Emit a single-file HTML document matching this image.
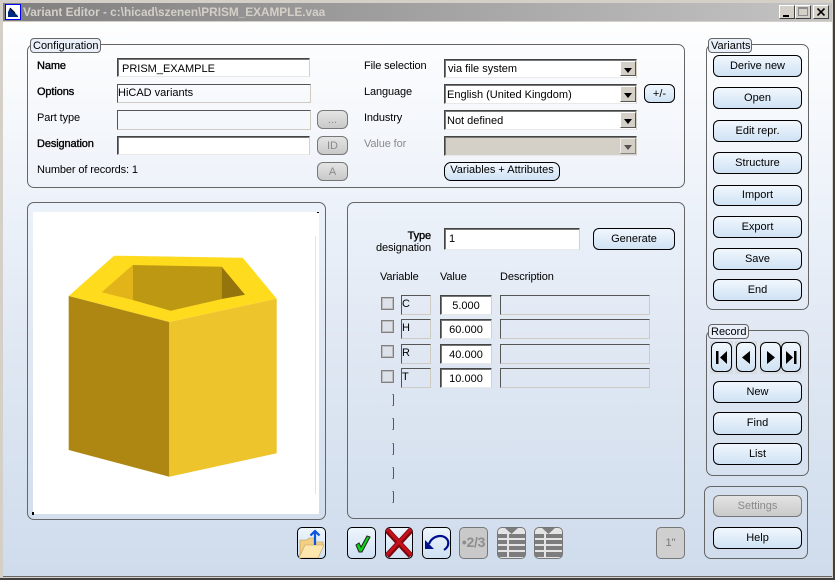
<!DOCTYPE html>
<html><head><meta charset="utf-8">
<style>
html,body{margin:0;padding:0;background:#d4d0c8}
#w{position:relative;width:835px;height:580px;overflow:hidden;background:#d4d0c8;font-family:"Liberation Sans",sans-serif;font-size:11px;color:#000}
#w div,#w svg{position:absolute;box-sizing:border-box}
.bg{left:3px;top:22px;width:829px;height:555px;background:linear-gradient(#fefefe 0%,#eef3fa 30%,#dfe7f3 60%,#cfdcec 100%)}
.tb{left:3px;top:3px;width:829px;height:18px;background:linear-gradient(90deg,#7f7f7f,#c4c4c4)}
.tt{left:23px;top:4px;font-weight:bold;font-size:11.8px;color:#d4d0c8;white-space:nowrap;line-height:17px}
.g{border:1px solid #666;border-radius:7px}
.lg{border:1px solid #666;border-radius:4px;background:#e9f0fa;height:15px;line-height:15px;padding-left:2px;white-space:nowrap;font-size:11px}
.l{white-space:nowrap;line-height:13px;height:13px;margin-top:1px;letter-spacing:-.12px}
.b{-webkit-text-stroke:.35px #000}
.f{background:#fff;border:1px solid;border-color:#444 #d4d0c8 #e8e8e8 #444;box-shadow:inset 1px 1px 0 #777;line-height:20px;padding-left:4px;white-space:nowrap}
.ro{background:transparent;border-color:#555 #cfcbc3 #cfcbc3 #555;box-shadow:none;padding-left:0;line-height:16px}
.btn{border:1px solid #000;border-radius:6px;background:linear-gradient(#f1f7fd,#cfe2f4);text-align:center;line-height:21px;white-space:nowrap}
.dis{border-color:#777;background:linear-gradient(#e4e4e4,#c9c9c9);color:#8a8a8a}
.dd{width:16px;background:#d4d0c8;border:1px solid;border-color:#fff #555 #555 #fff}
.dd:after{content:"";position:absolute;left:3px;top:6px;border:4px solid transparent;border-top:5px solid #000;border-bottom:0}
.cb{width:13px;height:13px;background:#dde2ea;border:1px solid #808080;box-shadow:inset 0 0 0 1px #bdbdbd}
.br{left:392px;width:2px;height:12px;border-right:1px solid #555;border-top:1px solid #999;border-bottom:1px solid #999}
.nav{background:#d8dde4;top:341px;height:33px}
.ib{top:527px;height:32px;width:29px;border:1px solid #000;border-radius:5px;background:linear-gradient(#eef5fc,#cfe1f3)}
.ig{border-color:#777;background:#c9c9c9}
</style></head><body>
<div id="w">
<div class="tb"></div>
<div class="bg"></div>
<div style="left:3px;top:576px;width:829px;height:1px;background:#666"></div>
<div style="left:0;top:578px;width:835px;height:2px;background:#404040"></div>
<div style="left:833px;top:0;width:2px;height:580px;background:#404040"></div>

<svg style="left:5px;top:4px" width="16" height="16" viewBox="0 0 16 16"><rect width="16" height="16" fill="#fff"/><rect x=".5" y=".5" width="15" height="15" fill="none" stroke="#00f"/><path d="M3 13V8L5 4l3 3 2 2 3 3v1z" fill="#002a80"/><path d="M5 4l5 5" stroke="#000"/></svg>
<div class="tt">Variant Editor - c:\hicad\szenen\PRISM_EXAMPLE.vaa</div>
<div style="left:779px;top:5px;width:16px;height:14px;background:#d4d0c8;border:1px solid;border-color:#fff #404040 #404040 #fff"><div style="left:3px;top:9px;width:6px;height:2px;background:#000"></div></div>
<div style="left:795px;top:5px;width:16px;height:14px;background:#d4d0c8;border:1px solid;border-color:#fff #404040 #404040 #fff"><div style="left:2px;top:1px;width:10px;height:9px;border:1px solid #8c8c8c;border-top-width:2px"></div></div>
<div style="left:813px;top:5px;width:16px;height:14px;background:#d4d0c8;border:1px solid;border-color:#fff #404040 #404040 #fff"><svg style="left:3px;top:2px" width="9" height="8"><path d="M.5.5l7 7M7.5.5l-7 7" stroke="#000" stroke-width="1.6"/></svg></div>

<!-- Configuration -->
<div class="g" style="left:27px;top:44px;width:658px;height:144px"></div>
<div class="lg" style="left:30px;top:38px;width:71px">Configuration</div>
<div class="l b" style="left:37px;top:59px">Name</div>
<div class="l b" style="left:37px;top:85px">Options</div>
<div class="l" style="left:37px;top:111px">Part type</div>
<div class="l b" style="left:37px;top:137px">Designation</div>
<div class="l" style="left:37px;top:163px">Number of records: 1</div>
<div class="f" style="left:117px;top:58px;width:193px;height:19px">PRISM_EXAMPLE</div>
<div class="f ro" style="left:117px;top:84px;width:194px;height:19px">HiCAD variants</div>
<div class="f ro" style="left:117px;top:110px;width:194px;height:20px"></div>
<div class="f" style="left:117px;top:136px;width:193px;height:19px"></div>
<div class="btn dis" style="left:317px;top:110px;width:31px;height:19px;line-height:19px">...</div>
<div class="btn dis" style="left:317px;top:136px;width:31px;height:19px;line-height:18px">ID</div>
<div class="btn dis" style="left:317px;top:162px;width:31px;height:19px;line-height:18px">A</div>

<div class="l" style="left:364px;top:59px">File selection</div>
<div class="l" style="left:364px;top:85px">Language</div>
<div class="l" style="left:364px;top:111px">Industry</div>
<div class="l" style="left:364px;top:137px;color:#8a8a8a">Value for</div>
<div class="f" style="left:444px;top:59px;width:193px;height:19px;padding-left:3px;line-height:19px">via file system<div class="dd" style="left:175px;top:1px;height:15px"></div></div>
<div class="f" style="left:444px;top:84px;width:193px;height:20px;padding-left:2px;line-height:21px">English (United Kingdom)<div class="dd" style="left:175px;top:1px;height:16px"></div></div>
<div class="f" style="left:444px;top:110px;width:193px;height:20px;padding-left:2px;line-height:21px">Not defined<div class="dd" style="left:175px;top:1px;height:16px"></div></div>
<div class="f" style="left:444px;top:136px;width:193px;height:20px;background:#d4d0c8"><div class="dd" style="left:175px;top:1px;height:16px;opacity:.6"></div></div>
<div class="btn" style="left:644px;top:84px;width:31px;height:19px;line-height:18px">+/-</div>
<div class="btn" style="left:444px;top:162px;width:116px;height:19px;line-height:14px;border-radius:7px">Variables + Attributes</div>

<!-- Preview -->
<div class="g" style="left:27px;top:202px;width:299px;height:318px"></div>
<div style="left:33px;top:212px;width:286px;height:302px;background:#fff"></div>
<div style="left:317px;top:212px;width:2px;height:1px;background:#000"></div>
<div style="left:315px;top:236px;width:1px;height:258px;background:#dbe5f1"></div>
<div style="left:32px;top:512px;width:2px;height:3px;background:#000"></div>
<svg style="left:0;top:0" width="330" height="520" viewBox="0 0 330 520">
<polygon points="114,255.7 242.7,257.7 276.7,298.7 169.3,322 68.7,296" fill="#ffdb1e"/>
<polygon points="132.7,265 221.7,266.7 221.7,299 170.7,310.7 132.7,300" fill="#bc9813"/>
<polygon points="101.7,292.3 132.7,265 132.7,300" fill="#e3b41a"/>
<polygon points="221.7,266.7 245,294.7 221.7,299" fill="#94740d"/>
<polygon points="68.7,296 169.3,322 169.3,476.7 68.7,450" fill="#ad8712"/>
<polygon points="169.3,322 276.7,298.7 276.7,453.3 169.3,476.7" fill="#edc42c"/>
</svg>

<!-- Params -->
<div class="g" style="left:347px;top:202px;width:338px;height:317px"></div>
<div class="l b" style="left:360px;top:229px;width:71px;text-align:right">Type</div>
<div class="l" style="left:360px;top:241px;width:71px;text-align:right">designation</div>
<div class="f" style="left:444px;top:228px;width:136px;height:22px;line-height:21px">1</div>
<div class="btn" style="left:593px;top:228px;width:82px;height:22px">Generate</div>
<div class="l" style="left:380px;top:270px">Variable</div>
<div class="l" style="left:440px;top:270px">Value</div>
<div class="l" style="left:500px;top:270px">Description</div>

<div class="cb" style="left:381px;top:297px"></div>
<div class="f ro" style="left:401px;top:295px;width:30px;height:20px">C</div>
<div class="f" style="left:440px;top:295px;width:52px;height:20px;text-align:center;padding:0;line-height:21px">5.000</div>
<div class="f ro" style="left:500px;top:295px;width:150px;height:20px"></div>
<div class="cb" style="left:381px;top:320px"></div>
<div class="f ro" style="left:401px;top:319px;width:30px;height:20px">H</div>
<div class="f" style="left:440px;top:319px;width:52px;height:20px;text-align:center;padding:0;line-height:21px">60.000</div>
<div class="f ro" style="left:500px;top:319px;width:150px;height:20px"></div>
<div class="cb" style="left:381px;top:345px"></div>
<div class="f ro" style="left:401px;top:344px;width:30px;height:20px">R</div>
<div class="f" style="left:440px;top:344px;width:52px;height:20px;text-align:center;padding:0;line-height:21px">40.000</div>
<div class="f ro" style="left:500px;top:344px;width:150px;height:20px"></div>
<div class="cb" style="left:381px;top:370px"></div>
<div class="f ro" style="left:401px;top:368px;width:30px;height:20px">T</div>
<div class="f" style="left:440px;top:368px;width:52px;height:20px;text-align:center;padding:0;line-height:21px">10.000</div>
<div class="f ro" style="left:500px;top:368px;width:150px;height:20px"></div>
<div class="br" style="top:394px"></div>
<div class="br" style="top:418px"></div>
<div class="br" style="top:443px"></div>
<div class="br" style="top:467px"></div>
<div class="br" style="top:491px"></div>

<!-- Variants -->
<div class="g" style="left:706px;top:44px;width:103px;height:266px"></div>
<div class="lg" style="left:708px;top:38px;width:44px">Variants</div>
<div class="btn" style="left:713px;top:55px;width:89px;height:22px">Derive new</div>
<div class="btn" style="left:713px;top:87px;width:89px;height:22px">Open</div>
<div class="btn" style="left:713px;top:120px;width:89px;height:22px">Edit repr.</div>
<div class="btn" style="left:713px;top:152px;width:89px;height:22px">Structure</div>
<div class="btn" style="left:713px;top:185px;width:89px;height:21px;line-height:19px">Import</div>
<div class="btn" style="left:713px;top:216px;width:89px;height:22px">Export</div>
<div class="btn" style="left:713px;top:248px;width:89px;height:22px">Save</div>
<div class="btn" style="left:713px;top:279px;width:89px;height:22px">End</div>

<!-- Record -->
<div class="g" style="left:706px;top:330px;width:103px;height:146px"></div>
<div class="lg" style="left:708px;top:324px;width:41px">Record</div>
<div class="nav" style="left:710px;width:23px"></div>
<div class="nav" style="left:735px;width:22px"></div>
<div class="nav" style="left:760px;width:22px"></div>
<div class="nav" style="left:781px;width:21px"></div>
<div class="btn" style="left:711px;top:342px;width:21px;height:30px"><svg style="left:4px;top:8px" width="12" height="13"><path d="M0 0h2.500v13H0zM11 0v13L4 6.500z" fill="#000"/></svg></div>
<div class="btn" style="left:736px;top:342px;width:20px;height:30px"><svg style="left:5px;top:8px" width="9" height="13"><path d="M8 0v13L0 6.500z" fill="#000"/></svg></div>
<div class="btn" style="left:760px;top:342px;width:21px;height:30px"><svg style="left:6px;top:8px" width="9" height="13"><path d="M0 0v13L8 6.500z" fill="#000"/></svg></div>
<div class="btn" style="left:781px;top:342px;width:20px;height:30px"><svg style="left:4px;top:8px" width="12" height="13"><path d="M0 0v13L7 6.500zM8 0h2.500v13H8z" fill="#000"/></svg></div>
<div class="btn" style="left:713px;top:381px;width:89px;height:22px">New</div>
<div class="btn" style="left:713px;top:412px;width:89px;height:23px">Find</div>
<div class="btn" style="left:713px;top:443px;width:89px;height:22px">List</div>

<div class="g" style="left:704px;top:486px;width:104px;height:73px"></div>
<div class="btn dis" style="left:713px;top:495px;width:89px;height:22px">Settings</div>
<div class="btn" style="left:713px;top:527px;width:89px;height:22px">Help</div>

<!-- Bottom toolbar -->
<div class="ib" style="left:297px"><svg style="left:0;top:0" width="27" height="30" viewBox="0 0 27 30"><path d="M2 12h7l2-2h6v4h8v6L6 30H2z" fill="#f3cf83" stroke="#b9975a" stroke-width=".6"/><path d="M7 17h19l-6 13H1z" fill="#fde7ae" stroke="#c2a061" stroke-width=".6"/><path d="M17 17V3M12.500 7.500L17 3l4.500 4.500" fill="none" stroke="#0a55e0" stroke-width="2.200"/></svg></div>
<div class="ib" style="left:347px"><svg style="left:0;top:0" width="27" height="30" viewBox="0 0 27 30"><path d="M8 17l3-2 2 4 6-11 3 1-8 15h-3z" fill="#0dd41a" stroke="#222" stroke-width="1"/></svg></div>
<div class="ib" style="left:385px;width:28px"><svg style="left:-1px;top:-1px" width="28" height="32" viewBox="0 0 28 32"><path d="M2 3l24 26M26 3L2 29" stroke="#7a0a10" stroke-width="6"/><path d="M2 2l24 26M26 2L2 28" stroke="#c8101a" stroke-width="3"/></svg></div>
<div class="ib" style="left:422px"><svg style="left:0;top:0" width="27" height="30" viewBox="0 0 27 30"><path d="M6 16C9 7 22 5 25 13c1 4-1 7-4 9" fill="none" stroke="#00108c" stroke-width="2.200"/><path d="M2 12l0 9 9 0z" fill="#00108c"/></svg></div>
<div class="ib ig" style="left:459px;font-weight:bold;font-size:14px;color:#8d8d8d;text-align:center;line-height:29px;letter-spacing:-.3px;white-space:nowrap">•2/3</div>
<div class="ib ig" style="left:497px;background:#e4e4e4"><svg style="left:0;top:0" width="27" height="30" viewBox="0 0 27 30"><path d="M7 0h13l-6.500 6z" fill="#7d7d7d"/><path d="M0 6h9v4H0zM11 6h16v4H11zM0 12h9v4H0zM11 12h16v4H11zM0 18h9v4H0zM11 18h16v4H11zM0 24h9v5H0zM11 24h16v5H11z" fill="#7d7d7d"/></svg></div>
<div class="ib ig" style="left:534px;background:#e4e4e4"><svg style="left:0;top:0" width="27" height="30" viewBox="0 0 27 30"><path d="M7 0h13l-6.500 6z" fill="#7d7d7d"/><path d="M0 6h9v4H0zM11 6h16v4H11zM0 12h9v4H0zM11 12h16v4H11zM0 18h9v4H0zM11 18h16v4H11zM0 24h9v5H0zM11 24h16v5H11z" fill="#7d7d7d"/></svg></div>
<div class="ib ig" style="left:656px;color:#777;text-align:center;line-height:30px;font-size:11px;background:#cfcfcf">1"</div>
</div>
</body></html>
